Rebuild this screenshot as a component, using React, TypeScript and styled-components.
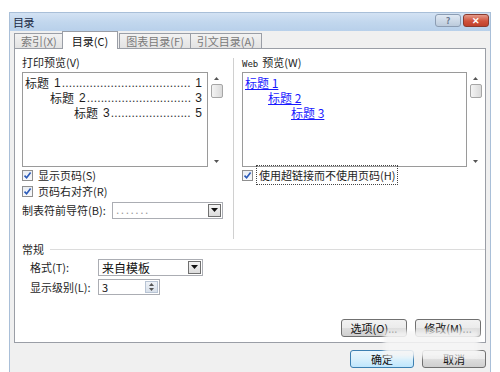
import React from "react";
import styled, { createGlobalStyle, css } from "styled-components";

// ===================== GLOBAL =====================
const GlobalStyle = createGlobalStyle`
  html, body {
    margin: 0;
    padding: 0;
    background: #ffffff;
    overflow: hidden;
  }
  body {
    font-family: "Noto Sans CJK SC", "Liberation Sans", sans-serif;
    font-size: 11px;
    color: #1e1e1e;
  }
`;

// ===================== WINDOW FRAME =====================
const Window = styled.div`
  margin: 12px 0 0 9px;
  width: 482px;
  height: 372px;
  box-sizing: border-box;
  border: 1px solid #a9bfd8;
  border-bottom: none;
  background: #f0f0f0;
  display: flex;
  flex-direction: column;
`;

const TitleBar = styled.div`
  height: 18px;
  flex-shrink: 0;
  display: flex;
  align-items: center;
  justify-content: space-between;
  padding: 0 1px 0 3px;
  background: linear-gradient(180deg, #d3e2f3 0%, #c2d7ee 50%, #b8d0ea 100%);
`;

const TitleText = styled.span`
  font-size: 11px;
  color: #1b2a44;
  letter-spacing: -0.5px;
`;

const TitleButtons = styled.div`
  display: flex;
  gap: 2px;
  align-self: flex-start;
  margin-top: 1px;
`;

const CaptionButton = styled.div<{ $close?: boolean }>`
  width: 26px;
  height: 13px;
  border-radius: 3px;
  display: flex;
  align-items: center;
  justify-content: center;
  font-size: 9px;
  font-weight: 700;
  box-sizing: border-box;
  ${({ $close }) =>
    $close
      ? css`
          background: linear-gradient(180deg, #e49a8a 0%, #d0523c 55%, #c0412c 100%);
          border: 1px solid #8a3a2e;
          color: #ffffff;
        `
      : css`
          background: linear-gradient(180deg, #dfe8f3 0%, #bccbdc 100%);
          border: 1px solid #8c9db3;
          color: #6b7b90;
        `}
`;

const Body = styled.div`
  flex: 1;
  display: flex;
  flex-direction: column;
  padding: 0 4px;
`;

// ===================== TABS =====================
const TabRow = styled.div`
  display: flex;
  align-items: flex-end;
  height: 18px;
  flex-shrink: 0;
  position: relative;
  z-index: 1;
  margin-bottom: -1px;
`;

const Tab = styled.div<{ $active?: boolean }>`
  box-sizing: border-box;
  display: flex;
  align-items: center;
  justify-content: center;
  font-size: 11px;
  border: 1px solid #9a9ea6;
  border-bottom: none;
  margin-right: -1px;
  ${({ $active }) =>
    $active
      ? css`
          height: 18px;
          background: #ffffff;
          color: #111;
          padding: 0 9px;
          margin-left: -1px;
          margin-right: 1px;
        `
      : css`
          height: 15px;
          background: linear-gradient(180deg, #f2f2f2 0%, #e3e3e3 100%);
          color: #7a7a7a;
          padding: 0 6px;
          margin-bottom: 1px;
        `}
`;

const Panel = styled.div`
  box-sizing: border-box;
  height: 295px;
  flex-shrink: 0;
  width: 472px;
  border: 1px solid #9a9ea6;
  background: #ffffff;
  padding: 6px 0 0 7px;
  display: flex;
  flex-direction: column;
`;

const PreviewRow = styled.div`
  display: flex;
  height: 184px;
`;

const Column = styled.div<{ $w: number }>`
  width: ${({ $w }) => $w}px;
  display: flex;
  flex-direction: column;
`;

const Divider = styled.div`
  width: 1px;
  align-self: stretch;
  background: #d0d0d0;
  margin: 3px 8px 0 10px;
`;

const GroupLabel = styled.div`
  height: 16px;
  line-height: 14px;
  font-size: 11px;
  margin-bottom: 1px;
`;

const WebWord = styled.span`
  font-family: "DejaVu Sans Mono", monospace;
  font-size: 9px;
  margin-right: 4px;
`;

const ListWrap = styled.div`
  display: flex;
  height: 95px;
`;

const ListBox = styled.div<{ $w: number }>`
  box-sizing: border-box;
  width: ${({ $w }) => $w}px;
  height: 95px;
  border: 1px solid #9a9a9a;
  background: #ffffff;
  padding: 2px 5px 0 2px;
`;

const Scroll = styled.div`
  width: 13px;
  margin-left: 2px;
  display: flex;
  flex-direction: column;
  align-items: center;
`;

const ScrollArrow = styled.div<{ $down?: boolean }>`
  height: 12px;
  width: 13px;
  display: flex;
  align-items: center;
  justify-content: center;
  ${({ $down }) => $down && css`margin-top: auto;`}
`;

const Thumb = styled.div`
  width: 12px;
  height: 14px;
  box-sizing: border-box;
  border: 1px solid #a6a6a6;
  border-radius: 2px;
  background: linear-gradient(90deg, #f4f4f4 0%, #dadada 100%);
`;

const TocLine = styled.div<{ $indent: number }>`
  display: flex;
  height: 15px;
  align-items: center;
  padding-left: ${({ $indent }) => $indent}px;
  font-size: 12px;
  white-space: nowrap;
`;

const Num = styled.span`
  font-family: "Liberation Sans", sans-serif;
  margin-left: 5px;
`;

const Dots = styled.span`
  font-family: "Liberation Sans", sans-serif;
  letter-spacing: 0.15px;
  color: #333;
  margin-left: 1px;
`;

const PageNum = styled.span`
  font-family: "Liberation Sans", sans-serif;
  font-size: 12px;
  margin-left: auto;
`;

const WebLink = styled.a<{ $indent: number }>`
  display: block;
  height: 15px;
  line-height: 15px;
  margin-left: ${({ $indent }) => $indent}px;
  color: #1a1aff;
  text-decoration: underline;
  font-size: 12px;
  white-space: nowrap;
  width: max-content;
`;

// ===================== CONTROLS =====================
const CheckRow = styled.label`
  display: flex;
  align-items: center;
  height: 16px;
  gap: 5px;
  font-size: 11px;
`;

const CheckBox = styled.span`
  width: 11px;
  height: 11px;
  box-sizing: border-box;
  border: 1px solid #8f8f8f;
  background: linear-gradient(180deg, #e9edf3 0%, #f8f9fb 100%);
  display: flex;
  align-items: center;
  justify-content: center;
`;

const FocusText = styled.span`
  outline: 1px dotted #444;
  outline-offset: 1px;
  padding: 0 1px;
`;

const FieldRow = styled.div<{ $h?: number }>`
  display: flex;
  align-items: center;
  height: ${({ $h }) => $h ?? 22}px;
  font-size: 11px;
`;

const FieldLabel = styled.span<{ $w: number }>`
  width: ${({ $w }) => $w}px;
  flex-shrink: 0;
`;

const Select = styled.div<{ $w: number; $h?: number }>`
  box-sizing: border-box;
  width: ${({ $w }) => $w}px;
  height: ${({ $h }) => $h ?? 17}px;
  border: 1px solid #abadb3;
  background: #fff;
  display: flex;
  align-items: center;
  padding-left: 3px;
  font-size: 12px;
`;

const SelectValue = styled.span<{ $muted?: boolean }>`
  flex: 1;
  color: ${({ $muted }) => ($muted ? "#999" : "#111")};
  letter-spacing: ${({ $muted }) => ($muted ? "1.5px" : "0")};
  font-family: ${({ $muted }) =>
    $muted ? '"Liberation Sans", sans-serif' : "inherit"};
`;

const DropBtn = styled.span`
  width: 13px;
  height: 13px;
  margin-right: 1px;
  box-sizing: border-box;
  border: 1px solid #707070;
  background: linear-gradient(180deg, #f4f4f4 0%, #dcdcdc 100%);
  display: flex;
  align-items: center;
  justify-content: center;
`;

const SpinBtns = styled.span`
  width: 13px;
  height: 12px;
  margin-right: 1px;
  display: flex;
  flex-direction: column;
  box-sizing: border-box;
  border: 1px solid #b8c4d4;
  background: linear-gradient(180deg, #eef2f7 0%, #d8e0ea 100%);
  align-items: center;
  justify-content: space-around;
`;

const SectionHead = styled.div`
  display: flex;
  align-items: center;
  gap: 6px;
  height: 16px;
  font-size: 11px;
  margin-top: 2px;
`;

const Rule = styled.div`
  flex: 1;
  height: 1px;
  background: #dcdcdc;
`;

const Indented = styled.div`
  padding-left: 8px;
  display: flex;
  flex-direction: column;
`;

const ButtonRow = styled.div<{ $pad: number }>`
  display: flex;
  justify-content: flex-end;
  gap: 8px;
  padding-right: ${({ $pad }) => $pad}px;
`;

const PanelButtons = styled(ButtonRow)`
  margin-top: auto;
  margin-bottom: 5px;
`;

const Button = styled.button<{ $default?: boolean; $w?: number }>`
  box-sizing: border-box;
  width: ${({ $w }) => $w ?? 66}px;
  height: 18px;
  border-radius: 3px;
  border: 1px solid ${({ $default }) => ($default ? "#3c7fb1" : "#707070")};
  background: ${({ $default }) =>
    $default
      ? "linear-gradient(180deg, #eaf6fd 0%, #d9f0fc 50%, #bee6fd 100%)"
      : "linear-gradient(180deg, #f2f2f2 0%, #ebebeb 50%, #dddddd 51%, #cfcfcf 100%)"};
  font-family: inherit;
  font-size: 11px;
  color: #111;
  padding: 0;
  display: flex;
  align-items: center;
  justify-content: center;
`;

const Footer = styled.div`
  padding-top: 7px;
  position: relative;
`;

const Smudge = styled.div`
  position: absolute;
  left: 370px;
  top: -12px;
  width: 95px;
  height: 26px;
  background: rgba(245, 245, 245, 0.88);
  filter: blur(2px);
  pointer-events: none;
`;

// ===================== ICONS =====================
const Check = () => (
  <svg width="9" height="9" viewBox="0 0 9 9">
    <path d="M1.5 4.6 L3.6 6.8 L7.6 1.6" stroke="#2a5ab8" strokeWidth="1.6" fill="none" />
  </svg>
);

const Caret = () => (
  <svg width="7" height="4" viewBox="0 0 7 4">
    <path d="M0 0 H7 L3.5 4 Z" fill="#111" />
  </svg>
);

const Tri = ({ up }: { up?: boolean }) => (
  <svg width="5" height="3" viewBox="0 0 5 3">
    <path d={up ? "M0 3 H5 L2.5 0 Z" : "M0 0 H5 L2.5 3 Z"} fill="#555" />
  </svg>
);

// ===================== DATA =====================
const toc = [
  { indent: 0, n: "1", page: "1", dots: 37 },
  { indent: 25, n: "2", page: "3", dots: 30 },
  { indent: 49, n: "3", page: "5", dots: 23 },
];

const ScrollBar = () => (
  <Scroll>
    <ScrollArrow>
      <Tri up />
    </ScrollArrow>
    <Thumb />
    <ScrollArrow $down>
      <Tri />
    </ScrollArrow>
  </Scroll>
);

// ===================== COMPONENT =====================
const App: React.FC = () => {
  return (
    <>
      <GlobalStyle />
      <Window>
        <TitleBar>
          <TitleText>目录</TitleText>
          <TitleButtons>
            <CaptionButton>?</CaptionButton>
            <CaptionButton $close>✕</CaptionButton>
          </TitleButtons>
        </TitleBar>

        <Body>
          <TabRow>
            <Tab>索引(X)</Tab>
            <Tab $active>目录(C)</Tab>
            <Tab>图表目录(F)</Tab>
            <Tab>引文目录(A)</Tab>
          </TabRow>

          <Panel>
            <PreviewRow>
              <Column $w={201}>
                <GroupLabel>打印预览(V)</GroupLabel>
                <ListWrap>
                  <ListBox $w={187}>
                    {toc.map((t) => (
                      <TocLine key={t.n} $indent={t.indent}>
                        标题<Num>{t.n}</Num>
                        <Dots>{".".repeat(t.dots)}</Dots>
                        <PageNum>{t.page}</PageNum>
                      </TocLine>
                    ))}
                  </ListBox>
                  <ScrollBar />
                </ListWrap>

                <CheckRow>
                  <CheckBox>
                    <Check />
                  </CheckBox>
                  显示页码(S)
                </CheckRow>
                <CheckRow>
                  <CheckBox>
                    <Check />
                  </CheckBox>
                  页码右对齐(R)
                </CheckRow>
                <FieldRow>
                  <FieldLabel $w={90}>制表符前导符(B):</FieldLabel>
                  <Select $w={111}>
                    <SelectValue $muted>.......</SelectValue>
                    <DropBtn>
                      <Caret />
                    </DropBtn>
                  </Select>
                </FieldRow>
              </Column>

              <Divider />

              <Column $w={241}>
                <GroupLabel>
                  <WebWord>Web</WebWord>预览(W)
                </GroupLabel>
                <ListWrap>
                  <ListBox $w={225}>
                    <WebLink $indent={0}>标题 1</WebLink>
                    <WebLink $indent={23}>标题 2</WebLink>
                    <WebLink $indent={46}>标题 3</WebLink>
                  </ListBox>
                  <ScrollBar />
                </ListWrap>
                <CheckRow>
                  <CheckBox>
                    <Check />
                  </CheckBox>
                  <FocusText>使用超链接而不使用页码(H)</FocusText>
                </CheckRow>
              </Column>
            </PreviewRow>

            <SectionHead>
              常规
              <Rule />
            </SectionHead>
            <Indented>
              <FieldRow $h={20}>
                <FieldLabel $w={68}>格式(T):</FieldLabel>
                <Select $w={105}>
                  <SelectValue>来自模板</SelectValue>
                  <DropBtn>
                    <Caret />
                  </DropBtn>
                </Select>
              </FieldRow>
              <FieldRow $h={20}>
                <FieldLabel $w={68}>显示级别(L):</FieldLabel>
                <Select $w={62} $h={16}>
                  <SelectValue style={{ fontSize: 11 }}>3</SelectValue>
                  <SpinBtns>
                    <Tri up />
                    <Tri />
                  </SpinBtns>
                </Select>
              </FieldRow>
            </Indented>

            <PanelButtons $pad={4}>
              <Button>选项(O)...</Button>
              <Button>修改(M)...</Button>
            </PanelButtons>
          </Panel>

          <Footer>
            <ButtonRow $pad={0}>
              <Button $default $w={64}>
                确定
              </Button>
              <Button $w={64}>取消</Button>
            </ButtonRow>
            <Smudge />
          </Footer>
        </Body>
      </Window>
    </>
  );
};

export default App;
